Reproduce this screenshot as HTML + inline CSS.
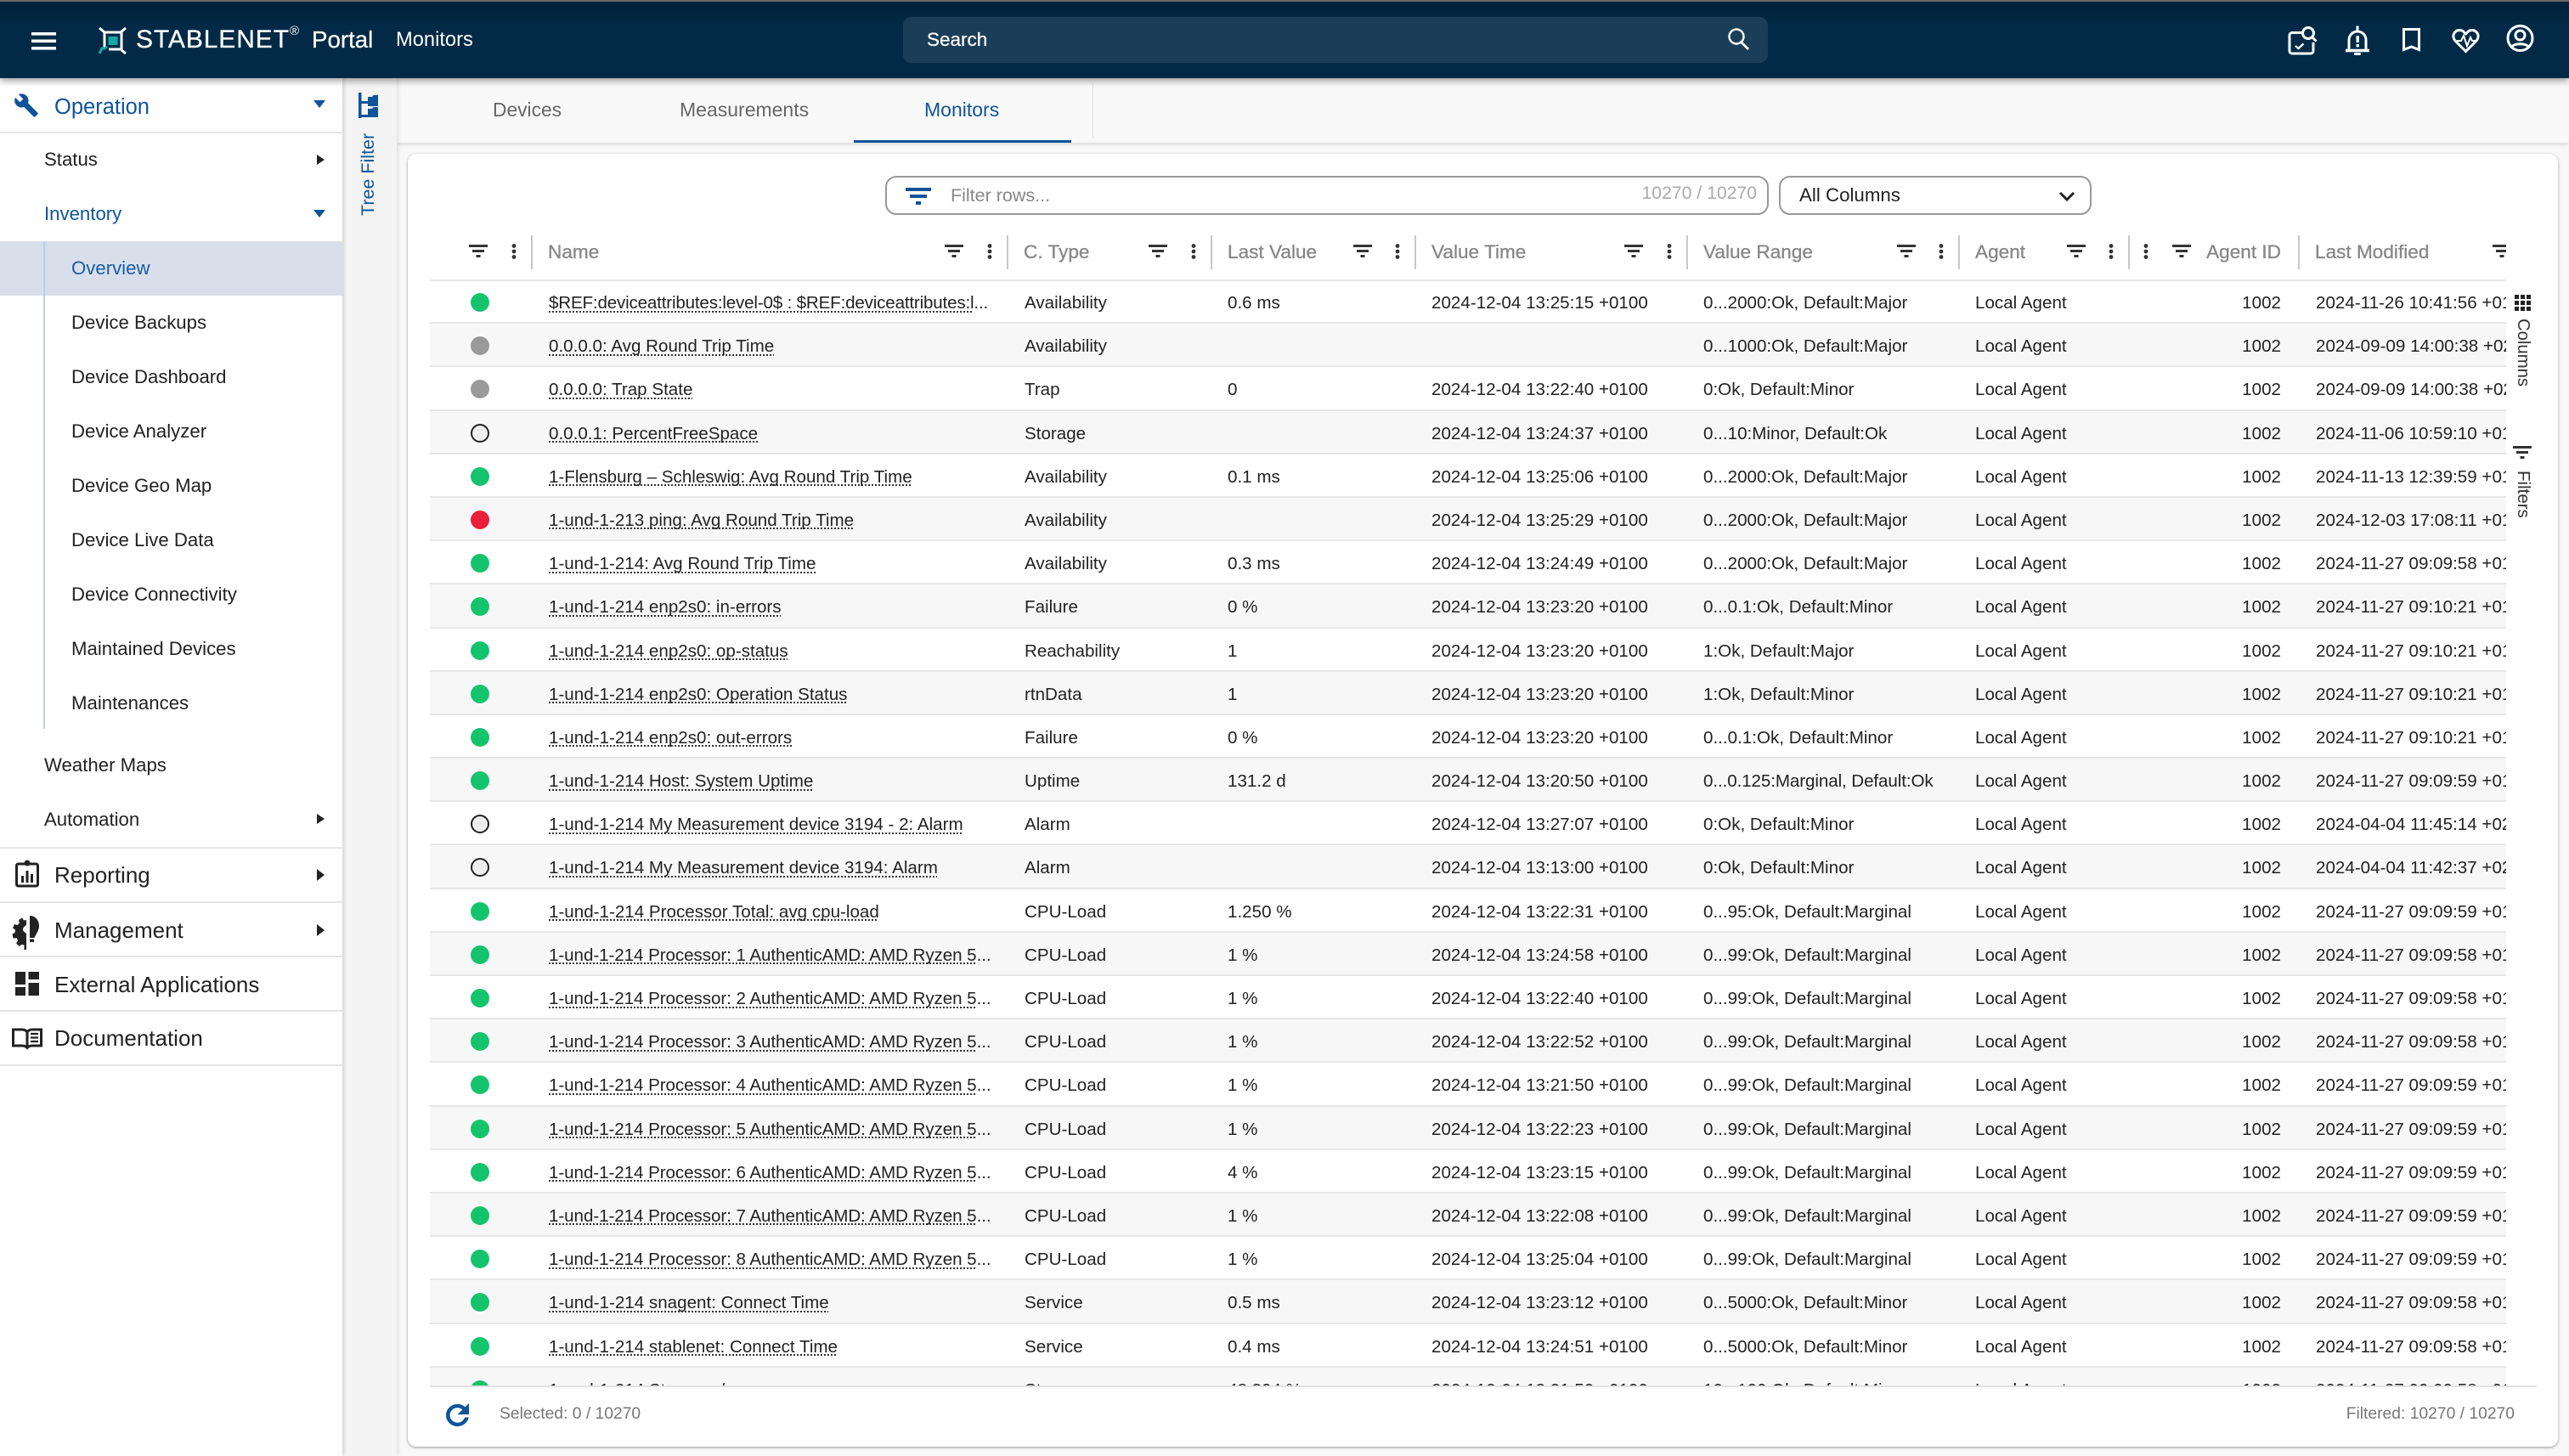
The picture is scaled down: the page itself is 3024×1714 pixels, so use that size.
<!DOCTYPE html>
<html lang="en"><head><meta charset="utf-8"><title>Monitors</title>
<style>
html,body{margin:0;padding:0;background:#f8f8f8}
body{position:relative;width:3024px;height:1714px;overflow:hidden;font-family:"Liberation Sans",Arial,sans-serif;color:#222}
.a{position:absolute;white-space:nowrap}
#top{position:absolute;left:0;top:0;width:3024px;height:92px;background:linear-gradient(#00233b 8px,#022a46 30px);border-top:2px solid #666;box-sizing:border-box;box-shadow:0 3px 8px rgba(0,0,0,.4);z-index:5}
#side{position:absolute;left:0;top:92px;width:403px;height:1622px;background:#fff;box-shadow:2px 0 5px rgba(0,0,0,.14);z-index:3}
#tree{position:absolute;left:403px;top:92px;width:64px;height:1622px;background:#f4f4f4;box-shadow:2px 0 4px rgba(0,0,0,.1);z-index:2}
#tabs{position:absolute;left:467px;top:92px;width:2557px;height:76px;background:#f9f9f9;box-shadow:0 2px 4px rgba(0,0,0,.13);z-index:1}
#card{position:absolute;left:480px;top:181px;width:2531px;height:1522px;background:#fff;border-radius:10px;box-shadow:0 1px 3px rgba(0,0,0,.4)}
.s{font-size:22.2px;line-height:30px;color:#222}
.m{font-size:26px;line-height:34px;color:#222}
.hr{position:absolute;left:0;width:403px;height:2px;background:#e6e6e6}
.tb{position:absolute;left:506px;top:330px;width:2444px;height:1301px;overflow:hidden}
.r{position:relative;height:51.2px;box-sizing:border-box;border-bottom:2px solid #e7e7e7;line-height:53px;font-size:20.6px;color:#222}
.r:nth-child(even){background:#f7f7f7}
.r>*{position:absolute;top:0;white-space:nowrap}
.r>i{left:48px;top:15px;width:22px;height:22px;border-radius:50%;box-sizing:border-box}
.g{background:#14c46c}.y{background:#9a9a9a}.e{background:#ea1f3c}.o{background:#eee;border:2px solid #222}
.r>a{left:140px;height:48px;overflow:hidden}
.r>a span{text-decoration:underline dotted #333 2px;text-underline-offset:3px;text-decoration-skip-ink:none}
.r>a.c{letter-spacing:-.07px}
.r>span:nth-of-type(1){left:700px}
.r>span:nth-of-type(2){left:939px}
.r>span:nth-of-type(3){left:1179px}
.r>span:nth-of-type(4){left:1499px}
.r>span:nth-of-type(5){left:1819px}
.r>span:nth-of-type(6){left:2079px;width:100px;text-align:right}
.r>span:nth-of-type(7){left:2220px}
.hd{position:absolute;left:506px;top:270px;width:2444px;height:56px;overflow:hidden}
.hd b{position:absolute;top:12px;font-weight:400;font-size:22.6px;line-height:30px;color:#888;-webkit-text-stroke:.35px #888;white-space:nowrap}
.hd svg{position:absolute}
.hd s{position:absolute;top:7px;width:2px;height:40px;background:#c8c8c8}
.fl{top:18px;width:22px;height:15px}
.kb{top:17px;width:6px;height:18px}
</style></head><body>
<svg width="0" height="0" style="position:absolute"><defs>
<symbol id="f" viewBox="0 0 22 15"><rect width="22" height="3" fill="#333"/><rect x="4" y="6" width="14" height="3" fill="#333"/><rect x="8.5" y="12" width="5" height="3" fill="#333"/></symbol>
<symbol id="k" viewBox="0 0 6 18"><circle cx="3" cy="2.5" r="2.4" fill="#333"/><circle cx="3" cy="9" r="2.4" fill="#333"/><circle cx="3" cy="15.5" r="2.4" fill="#333"/></symbol>
</defs></svg>

<div id="top"></div>
<svg class="a" style="left:0;top:0;z-index:6" width="3024" height="92" viewBox="0 0 3024 92" fill="none">
<rect x="37" y="38" width="29" height="3.6" fill="#fff"/><rect x="37" y="46.5" width="29" height="3.6" fill="#fff"/><rect x="37" y="55" width="29" height="3.6" fill="#fff"/>
<g stroke="#fff" stroke-width="3"><path d="M117 33l6 5M148 33l-6 5M123 38h19M123 38v19M143 38v21M128 58h15M143 59l5 4"/></g>
<rect x="127.500" y="43" width="11" height="10" fill="#17a9a4"/><path d="M117 63l3-6h3l3-2" stroke="#17a9a4" stroke-width="3"/>
<g stroke="#fff" stroke-width="3">
<path d="M2712 38.500H2698a3 3 0 0 0-3 3V60a3 3 0 0 0 3 3H2720a3 3 0 0 0 3-3V50"/><circle cx="2717" cy="39" r="6.500"/><path d="M2722 44l4.500 4.500"/><path d="M2702 54l3.500 3 6-5.500" stroke-width="2.400"/>
<path d="M2765 58V47a10 10 0 0 1 20 0V58"/><path d="M2761 59.500H2789" stroke-width="3.400"/>
<path d="M2829.500 34.500H2847.500V58.500L2838.500 55L2829.500 58.500Z"/>
<path d="M2902.500 60.500L2890.500 48.500C2883.500 41 2892 32.500 2899 36.500L2902.500 40L2906 36.500C2913 32.500 2921.500 41 2914.500 48.500Z"/>
<path d="M2892 48h5l3-6 4 12 4-10 2 4h5" stroke-width="2"/>
<circle cx="2966.500" cy="45" r="14.500"/><circle cx="2966.500" cy="41.500" r="5.500"/><path d="M2956 55.500C2960 50.500 2973 50.500 2977 55.500"/>
</g>
<g fill="#fff"><rect x="2773.500" y="30.500" width="3" height="5"/><rect x="2773.500" y="42" width="3.400" height="8"/><rect x="2773.500" y="52" width="3.400" height="3.400"/><rect x="2771" y="62" width="8" height="3" rx="1.500"/></g>
</svg>
<div class="a" style="left:160px;top:30px;font-size:30px;line-height:34px;color:#fff;letter-spacing:.9px;-webkit-text-stroke:.3px #fff;z-index:6">STABLENET</div>
<div class="a" style="left:341px;top:29px;font-size:15px;line-height:16px;color:#fff;z-index:6">®</div>
<div class="a" style="left:367px;top:30px;font-size:27.700px;line-height:34px;color:#fff;-webkit-text-stroke:.25px #fff;z-index:6">Portal</div>
<div class="a" style="left:466px;top:30px;font-size:23.700px;line-height:34px;color:#fff;z-index:6">Monitors</div>
<div class="a" style="left:1063px;top:20px;width:1018px;height:54px;background:#1b3e58;border-radius:10px;z-index:6"></div>
<div class="a" style="left:1091px;top:32px;font-size:22.500px;line-height:30px;color:#fff;z-index:6;-webkit-text-stroke:.25px #fff">Search</div>
<svg class="a" style="left:0;top:0;z-index:7" width="3024" height="92" fill="none"><circle cx="2044" cy="43" r="8.500" stroke="#fff" stroke-width="2.400"/><path d="M2050 50l8 8" stroke="#fff" stroke-width="2.800"/></svg>

<div id="side">
<div class="hr" style="top:63px"></div><div class="hr" style="top:905px"></div><div class="hr" style="top:969px"></div><div class="hr" style="top:1033px"></div><div class="hr" style="top:1097px"></div><div class="hr" style="top:1161px"></div>
<div class="a" style="left:0;top:192px;width:403px;height:64px;background:#d8dfeb"></div>
<div class="a" style="left:51px;top:192px;width:2px;height:574px;background:#bcd0e3"></div>
<div class="a m" style="left:64px;top:17px;color:#0f5499;font-size:25.500px">Operation</div>
<div class="a s" style="left:52px;top:81px">Status</div>
<div class="a s" style="left:52px;top:145px;color:#0f5499">Inventory</div>
<div class="a s" style="left:84px;top:209px;color:#1a5da3">Overview</div>
<div class="a s" style="left:84px;top:273px">Device Backups</div>
<div class="a s" style="left:84px;top:337px">Device Dashboard</div>
<div class="a s" style="left:84px;top:401px">Device Analyzer</div>
<div class="a s" style="left:84px;top:465px">Device Geo Map</div>
<div class="a s" style="left:84px;top:529px">Device Live Data</div>
<div class="a s" style="left:84px;top:593px">Device Connectivity</div>
<div class="a s" style="left:84px;top:657px">Maintained Devices</div>
<div class="a s" style="left:84px;top:721px">Maintenances</div>
<div class="a s" style="left:52px;top:794px">Weather Maps</div>
<div class="a s" style="left:52px;top:858px">Automation</div>
<div class="a m" style="left:64px;top:921px">Reporting</div>
<div class="a m" style="left:64px;top:986px">Management</div>
<div class="a m" style="left:64px;top:1050px">External Applications</div>
<div class="a m" style="left:64px;top:1113px">Documentation</div>
</div>
<svg class="a" style="left:0;top:92px;z-index:4" width="403" height="1180" viewBox="0 92 403 1180">
<g transform="translate(16 109) scale(1.250)"><path fill="#0f5499" d="M22.700 19l-9.100-9.100c.9-2.300.4-5-1.500-6.900-2-2-5-2.400-7.400-1.300L9 6 6 9 1.600 4.700C.4 7.100.9 10.100 2.900 12.100c1.900 1.900 4.600 2.400 6.900 1.500l9.100 9.100c.4.4 1 .4 1.400 0l2.300-2.300c.5-.4.500-1.100.1-1.400z"/></g>
<path fill="#0f5499" d="M369 118h14l-7 9zM369 247h14l-7 9z"/>
<path fill="#222" d="M373 182l9 6-9 6zM373 958l9 6-9 6zM373 1023l9 7-9 7zM373 1088l9 7-9 7z"/>
<g fill="none" stroke="#222" stroke-width="3"><rect x="19.500" y="1017" width="25" height="26" rx="2"/></g>
<g fill="#222"><circle cx="32" cy="1016" r="3.500"/><rect x="25" y="1031" width="3" height="8"/><rect x="30.500" y="1025" width="3" height="14"/><rect x="36" y="1029" width="3" height="10"/></g>
<path fill="#222" d="M31 1078v5l-3 .5-2-3-4 2.500 1 3.500-2.500 2.500-3.500-1-2 4.500 3 2-.5 3.500-3 1.500 1 5 4-.2 1.500 3-2 3 3.500 3.500 3.500-2 2.500 1v5.200h2.500V1099l-2.500-2c-2-1.500-2-4.500 0-6l2.500-2z"/>
<path fill="#222" d="M35 1078c6.500 0 11 5 11 12 0 5.500-3.500 9-5.500 14H35z"/>
<rect x="35" y="1105.500" width="5" height="3.500" fill="#222"/>
<g fill="#222"><rect x="18" y="1144" width="12" height="15"/><rect x="18" y="1162" width="12" height="10"/><rect x="33.500" y="1144" width="12.500" height="9"/><rect x="33.500" y="1157" width="12.500" height="15"/></g>
<g fill="none" stroke="#222" stroke-width="3"><path d="M15.500 1212H26Q30 1212 32 1215Q34 1212 38 1212H48.500V1231H38Q34 1231 32 1233.500Q30 1231 26 1231H15.500ZM32 1215V1233"/><path d="M36 1217h9M36 1221.500h9M36 1226h9" stroke-width="2.200"/></g>
</svg>

<div id="tree"></div>
<svg class="a" style="left:0;top:92px;z-index:4" width="467" height="60" viewBox="0 92 467 60"><g fill="#0f5499"><rect x="422" y="109" width="3.500" height="30"/><rect x="422" y="119" width="12" height="3"/><rect x="422" y="135" width="12" height="3"/><path d="M433 114h5l1.500-2H445v13h-12zM433 128h5l1.500-2H445v12h-12z"/></g></svg>
<div class="a" style="left:421px;top:156px;height:98px;line-height:24px;width:24px;writing-mode:vertical-rl;transform:rotate(180deg);font-size:21.500px;color:#0f5499;z-index:4">Tree Filter</div>

<div id="tabs">
<div class="a" style="left:113px;top:22px;font-size:22.800px;line-height:30px;color:#666">Devices</div>
<div class="a" style="left:333px;top:22px;font-size:23px;line-height:30px;color:#666">Measurements</div>
<div class="a" style="left:621px;top:22px;font-size:23px;line-height:30px;color:#0f5499">Monitors</div>
<div class="a" style="left:538px;top:73px;width:256px;height:3px;background:#0f5499"></div>
<div class="a" style="left:819px;top:6px;width:1px;height:64px;background:#ddd"></div>
</div>

<div id="card"></div>
<div class="a" style="left:1042px;top:207px;width:1040px;height:46px;border:2px solid #999;border-radius:13px;box-sizing:border-box;background:#fff"></div>
<svg class="a" style="left:1066px;top:221px" width="30" height="21"><rect width="30" height="4" fill="#0f5499"/><rect x="5" y="8" width="20" height="4" fill="#0f5499"/><rect x="12" y="16" width="6" height="4" fill="#0f5499"/></svg>
<div class="a" style="left:1119px;top:215px;font-size:21.500px;line-height:30px;color:#888">Filter rows...</div>
<div class="a" style="left:1900px;top:213px;width:168px;text-align:right;font-size:21.200px;line-height:30px;color:#aaa">10270 / 10270</div>
<div class="a" style="left:2094px;top:207px;width:368px;height:46px;border:2px solid #999;border-radius:13px;box-sizing:border-box;background:#fff"></div>
<div class="a" style="left:2118px;top:215px;font-size:22.300px;line-height:30px;color:#222">All Columns</div>
<svg class="a" style="left:2423px;top:225px" width="20" height="13" fill="none"><path d="M2 2l8 8 8-8" stroke="#222" stroke-width="3"/></svg>

<div class="hd">
<svg class="fl" style="left:46px"><use href="#f"/></svg><svg class="kb" style="left:96px"><use href="#k"/></svg><s style="left:119px"></s>
<b style="left:139px">Name</b><svg class="fl" style="left:606px"><use href="#f"/></svg><svg class="kb" style="left:656px"><use href="#k"/></svg><s style="left:679px"></s>
<b style="left:699px">C. Type</b><svg class="fl" style="left:846px"><use href="#f"/></svg><svg class="kb" style="left:896px"><use href="#k"/></svg><s style="left:919px"></s>
<b style="left:939px">Last Value</b><svg class="fl" style="left:1087px"><use href="#f"/></svg><svg class="kb" style="left:1136px"><use href="#k"/></svg><s style="left:1159px"></s>
<b style="left:1179px">Value Time</b><svg class="fl" style="left:1406px"><use href="#f"/></svg><svg class="kb" style="left:1456px"><use href="#k"/></svg><s style="left:1479px"></s>
<b style="left:1499px">Value Range</b><svg class="fl" style="left:1727px"><use href="#f"/></svg><svg class="kb" style="left:1776px"><use href="#k"/></svg><s style="left:1799px"></s>
<b style="left:1819px">Agent</b><svg class="fl" style="left:1927px"><use href="#f"/></svg><svg class="kb" style="left:1976px"><use href="#k"/></svg><s style="left:1999px"></s>
<svg class="kb" style="left:2017px"><use href="#k"/></svg><svg class="fl" style="left:2051px"><use href="#f"/></svg>
<b style="left:2079px;width:100px;text-align:right">Agent ID</b><s style="left:2199px"></s>
<b style="left:2219px">Last Modified</b><svg class="fl" style="left:2428px"><use href="#f"/></svg>
</div>
<div class="a" style="left:506px;top:329px;width:2444px;height:2px;background:#e7e7e7"></div>

<div class="tb">
<div class="r"><i class="g"></i><a style="letter-spacing:-.18px"><span>$REF:deviceattributes:level-0$ : $REF:deviceattributes:l</span>...</a><span>Availability</span><span>0.6 ms</span><span>2024-12-04 13:25:15 +0100</span><span>0...2000:Ok, Default:Major</span><span>Local Agent</span><span>1002</span><span>2024-11-26 10:41:56 +0100</span></div>
<div class="r"><i class="y"></i><a><span>0.0.0.0: Avg Round Trip Time</span></a><span>Availability</span><span></span><span></span><span>0...1000:Ok, Default:Major</span><span>Local Agent</span><span>1002</span><span>2024-09-09 14:00:38 +0200</span></div>
<div class="r"><i class="y"></i><a><span>0.0.0.0: Trap State</span></a><span>Trap</span><span>0</span><span>2024-12-04 13:22:40 +0100</span><span>0:Ok, Default:Minor</span><span>Local Agent</span><span>1002</span><span>2024-09-09 14:00:38 +0200</span></div>
<div class="r"><i class="o"></i><a><span>0.0.0.1: PercentFreeSpace</span></a><span>Storage</span><span></span><span>2024-12-04 13:24:37 +0100</span><span>0...10:Minor, Default:Ok</span><span>Local Agent</span><span>1002</span><span>2024-11-06 10:59:10 +0100</span></div>
<div class="r"><i class="g"></i><a><span>1-Flensburg – Schleswig: Avg Round Trip Time</span></a><span>Availability</span><span>0.1 ms</span><span>2024-12-04 13:25:06 +0100</span><span>0...2000:Ok, Default:Major</span><span>Local Agent</span><span>1002</span><span>2024-11-13 12:39:59 +0100</span></div>
<div class="r"><i class="e"></i><a><span>1-und-1-213 ping: Avg Round Trip Time</span></a><span>Availability</span><span></span><span>2024-12-04 13:25:29 +0100</span><span>0...2000:Ok, Default:Major</span><span>Local Agent</span><span>1002</span><span>2024-12-03 17:08:11 +0100</span></div>
<div class="r"><i class="g"></i><a><span>1-und-1-214: Avg Round Trip Time</span></a><span>Availability</span><span>0.3 ms</span><span>2024-12-04 13:24:49 +0100</span><span>0...2000:Ok, Default:Major</span><span>Local Agent</span><span>1002</span><span>2024-11-27 09:09:58 +0100</span></div>
<div class="r"><i class="g"></i><a><span>1-und-1-214 enp2s0: in-errors</span></a><span>Failure</span><span>0 %</span><span>2024-12-04 13:23:20 +0100</span><span>0...0.1:Ok, Default:Minor</span><span>Local Agent</span><span>1002</span><span>2024-11-27 09:10:21 +0100</span></div>
<div class="r"><i class="g"></i><a><span>1-und-1-214 enp2s0: op-status</span></a><span>Reachability</span><span>1</span><span>2024-12-04 13:23:20 +0100</span><span>1:Ok, Default:Major</span><span>Local Agent</span><span>1002</span><span>2024-11-27 09:10:21 +0100</span></div>
<div class="r"><i class="g"></i><a><span>1-und-1-214 enp2s0: Operation Status</span></a><span>rtnData</span><span>1</span><span>2024-12-04 13:23:20 +0100</span><span>1:Ok, Default:Minor</span><span>Local Agent</span><span>1002</span><span>2024-11-27 09:10:21 +0100</span></div>
<div class="r"><i class="g"></i><a><span>1-und-1-214 enp2s0: out-errors</span></a><span>Failure</span><span>0 %</span><span>2024-12-04 13:23:20 +0100</span><span>0...0.1:Ok, Default:Minor</span><span>Local Agent</span><span>1002</span><span>2024-11-27 09:10:21 +0100</span></div>
<div class="r"><i class="g"></i><a><span>1-und-1-214 Host: System Uptime</span></a><span>Uptime</span><span>131.2 d</span><span>2024-12-04 13:20:50 +0100</span><span style="letter-spacing:-.1px">0...0.125:Marginal, Default:Ok</span><span>Local Agent</span><span>1002</span><span>2024-11-27 09:09:59 +0100</span></div>
<div class="r"><i class="o"></i><a><span>1-und-1-214 My Measurement device 3194 - 2: Alarm</span></a><span>Alarm</span><span></span><span>2024-12-04 13:27:07 +0100</span><span>0:Ok, Default:Minor</span><span>Local Agent</span><span>1002</span><span>2024-04-04 11:45:14 +0200</span></div>
<div class="r"><i class="o"></i><a><span>1-und-1-214 My Measurement device 3194: Alarm</span></a><span>Alarm</span><span></span><span>2024-12-04 13:13:00 +0100</span><span>0:Ok, Default:Minor</span><span>Local Agent</span><span>1002</span><span>2024-04-04 11:42:37 +0200</span></div>
<div class="r"><i class="g"></i><a><span>1-und-1-214 Processor Total: avg cpu-load</span></a><span>CPU-Load</span><span>1.250 %</span><span>2024-12-04 13:22:31 +0100</span><span>0...95:Ok, Default:Marginal</span><span>Local Agent</span><span>1002</span><span>2024-11-27 09:09:59 +0100</span></div>
<div class="r"><i class="g"></i><a class="c"><span>1-und-1-214 Processor: 1 AuthenticAMD: AMD Ryzen 5</span>...</a><span>CPU-Load</span><span>1 %</span><span>2024-12-04 13:24:58 +0100</span><span>0...99:Ok, Default:Marginal</span><span>Local Agent</span><span>1002</span><span>2024-11-27 09:09:58 +0100</span></div>
<div class="r"><i class="g"></i><a class="c"><span>1-und-1-214 Processor: 2 AuthenticAMD: AMD Ryzen 5</span>...</a><span>CPU-Load</span><span>1 %</span><span>2024-12-04 13:22:40 +0100</span><span>0...99:Ok, Default:Marginal</span><span>Local Agent</span><span>1002</span><span>2024-11-27 09:09:58 +0100</span></div>
<div class="r"><i class="g"></i><a class="c"><span>1-und-1-214 Processor: 3 AuthenticAMD: AMD Ryzen 5</span>...</a><span>CPU-Load</span><span>1 %</span><span>2024-12-04 13:22:52 +0100</span><span>0...99:Ok, Default:Marginal</span><span>Local Agent</span><span>1002</span><span>2024-11-27 09:09:58 +0100</span></div>
<div class="r"><i class="g"></i><a class="c"><span>1-und-1-214 Processor: 4 AuthenticAMD: AMD Ryzen 5</span>...</a><span>CPU-Load</span><span>1 %</span><span>2024-12-04 13:21:50 +0100</span><span>0...99:Ok, Default:Marginal</span><span>Local Agent</span><span>1002</span><span>2024-11-27 09:09:59 +0100</span></div>
<div class="r"><i class="g"></i><a class="c"><span>1-und-1-214 Processor: 5 AuthenticAMD: AMD Ryzen 5</span>...</a><span>CPU-Load</span><span>1 %</span><span>2024-12-04 13:22:23 +0100</span><span>0...99:Ok, Default:Marginal</span><span>Local Agent</span><span>1002</span><span>2024-11-27 09:09:59 +0100</span></div>
<div class="r"><i class="g"></i><a class="c"><span>1-und-1-214 Processor: 6 AuthenticAMD: AMD Ryzen 5</span>...</a><span>CPU-Load</span><span>4 %</span><span>2024-12-04 13:23:15 +0100</span><span>0...99:Ok, Default:Marginal</span><span>Local Agent</span><span>1002</span><span>2024-11-27 09:09:59 +0100</span></div>
<div class="r"><i class="g"></i><a class="c"><span>1-und-1-214 Processor: 7 AuthenticAMD: AMD Ryzen 5</span>...</a><span>CPU-Load</span><span>1 %</span><span>2024-12-04 13:22:08 +0100</span><span>0...99:Ok, Default:Marginal</span><span>Local Agent</span><span>1002</span><span>2024-11-27 09:09:59 +0100</span></div>
<div class="r"><i class="g"></i><a class="c"><span>1-und-1-214 Processor: 8 AuthenticAMD: AMD Ryzen 5</span>...</a><span>CPU-Load</span><span>1 %</span><span>2024-12-04 13:25:04 +0100</span><span>0...99:Ok, Default:Marginal</span><span>Local Agent</span><span>1002</span><span>2024-11-27 09:09:59 +0100</span></div>
<div class="r"><i class="g"></i><a><span>1-und-1-214 snagent: Connect Time</span></a><span>Service</span><span>0.5 ms</span><span>2024-12-04 13:23:12 +0100</span><span>0...5000:Ok, Default:Minor</span><span>Local Agent</span><span>1002</span><span>2024-11-27 09:09:58 +0100</span></div>
<div class="r"><i class="g"></i><a><span>1-und-1-214 stablenet: Connect Time</span></a><span>Service</span><span>0.4 ms</span><span>2024-12-04 13:24:51 +0100</span><span>0...5000:Ok, Default:Minor</span><span>Local Agent</span><span>1002</span><span>2024-11-27 09:09:58 +0100</span></div>
<div class="r"><i class="g"></i><a><span>1-und-1-214 Storage: /...</span></a><span>Storage</span><span>48.394 %</span><span>2024-12-04 13:21:50 +0100</span><span>10...100:Ok, Default:Minor</span><span>Local Agent</span><span>1002</span><span>2024-11-27 09:09:58 +0100</span></div>
</div>
<div class="a" style="left:506px;top:1631px;width:2480px;height:2px;background:#e2e2e2"></div>

<svg class="a" style="left:2960px;top:347px" width="20" height="20"><g fill="#222"><rect width="5" height="5"/><rect x="7" width="5" height="5"/><rect x="14" width="5" height="5"/><rect y="7" width="5" height="5"/><rect x="7" y="7" width="5" height="5"/><rect x="14" y="7" width="5" height="5"/><rect y="14" width="5" height="5"/><rect x="7" y="14" width="5" height="5"/><rect x="14" y="14" width="5" height="5"/></g></svg>
<div class="a" style="left:2958px;top:375px;width:24px;line-height:24px;writing-mode:vertical-rl;font-size:20.300px;color:#333">Columns</div>
<svg class="a" style="left:2958px;top:525px" width="22" height="15"><use href="#f"/></svg>
<div class="a" style="left:2958px;top:554px;width:24px;line-height:24px;writing-mode:vertical-rl;font-size:20.500px;color:#333">Filters</div>

<svg class="a" style="left:524px;top:1652px" width="29" height="28" viewBox="3 3 18 18" preserveAspectRatio="none"><path fill="#0f5499" stroke="#0f5499" stroke-width=".8" d="M17.650 6.350C16.200 4.900 14.210 4 12 4c-4.420 0-7.990 3.580-7.990 8s3.570 8 7.990 8c3.730 0 6.840-2.550 7.730-6h-2.080c-.82 2.330-3.040 4-5.650 4-3.310 0-6-2.690-6-6s2.690-6 6-6c1.660 0 3.140.69 4.220 1.780L13 11h7V4l-2.350 2.350z"/></svg>
<div class="a" style="left:588px;top:1651px;font-size:19.300px;line-height:28px;color:#777">Selected: 0 / 10270</div>
<div class="a" style="left:2700px;top:1651px;width:260px;text-align:right;font-size:19.300px;line-height:28px;color:#777">Filtered: 10270 / 10270</div>
</body></html>
